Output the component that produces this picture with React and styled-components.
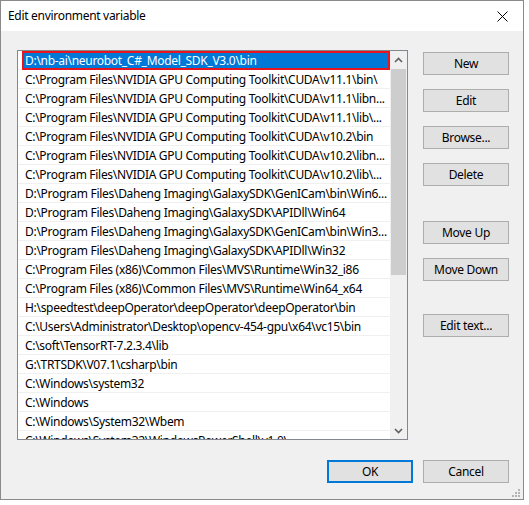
import React from "react";
import styled, { createGlobalStyle } from "styled-components";

const GlobalStyle = createGlobalStyle`
  html, body {
    margin: 0;
    padding: 0;
    background: #ffffff;
  }
  body {
    font-family: "Noto Sans", "Liberation Sans", sans-serif;
    font-size: 12px;
    letter-spacing: -0.3px;
    color: #000;
  }
`;

const paths = [
  "D:\\nb-ai\\neurobot_C#_Model_SDK_V3.0\\bin",
  "C:\\Program Files\\NVIDIA GPU Computing Toolkit\\CUDA\\v11.1\\bin\\",
  "C:\\Program Files\\NVIDIA GPU Computing Toolkit\\CUDA\\v11.1\\libn...",
  "C:\\Program Files\\NVIDIA GPU Computing Toolkit\\CUDA\\v11.1\\lib\\...",
  "C:\\Program Files\\NVIDIA GPU Computing Toolkit\\CUDA\\v10.2\\bin",
  "C:\\Program Files\\NVIDIA GPU Computing Toolkit\\CUDA\\v10.2\\libn...",
  "C:\\Program Files\\NVIDIA GPU Computing Toolkit\\CUDA\\v10.2\\lib\\...",
  "D:\\Program Files\\Daheng Imaging\\GalaxySDK\\GenICam\\bin\\Win6...",
  "D:\\Program Files\\Daheng Imaging\\GalaxySDK\\APIDll\\Win64",
  "D:\\Program Files\\Daheng Imaging\\GalaxySDK\\GenICam\\bin\\Win3...",
  "D:\\Program Files\\Daheng Imaging\\GalaxySDK\\APIDll\\Win32",
  "C:\\Program Files (x86)\\Common Files\\MVS\\Runtime\\Win32_i86",
  "C:\\Program Files (x86)\\Common Files\\MVS\\Runtime\\Win64_x64",
  "H:\\speedtest\\deepOperator\\deepOperator\\deepOperator\\bin",
  "C:\\Users\\Administrator\\Desktop\\opencv-454-gpu\\x64\\vc15\\bin",
  "C:\\soft\\TensorRT-7.2.3.4\\lib",
  "G:\\TRTSDK\\V07.1\\csharp\\bin",
  "C:\\Windows\\system32",
  "C:\\Windows",
  "C:\\Windows\\System32\\Wbem",
  "C:\\Windows\\System32\\WindowsPowerShell\\v1.0\\",
];

const Window = styled.div`
  width: 522px;
  height: 498px;
  border: 1px solid #8a8a8a;
  background: #f0f0f0;
  display: flex;
  flex-direction: column;
`;

const TitleBar = styled.div`
  height: 30px;
  background: #ffffff;
  display: flex;
  align-items: center;
  justify-content: space-between;
  padding: 0 15px 0 7px;
`;

const Title = styled.span`
  font-size: 12px;
  color: #000;
  padding-bottom: 1px;
`;

const Client = styled.div`
  flex: 1;
  position: relative;
  padding: 19px 14px 0 16px;
  display: flex;
  flex-direction: column;
`;

const Body = styled.div`
  display: flex;
  gap: 15px;
`;

const ListBox = styled.div`
  width: 390px;
  height: 388px;
  border: 1px solid #828790;
  background: #ffffff;
  display: flex;
  overflow: hidden;
`;

const Rows = styled.div`
  flex: 1;
  overflow: hidden;
`;

const Row = styled.div`
  height: 18px;
  border-bottom: 1px solid #f0f0f0;
  display: flex;
  padding-left: 4px;
`;

const Item = styled.div`
  flex: 1;
  box-sizing: border-box;
  height: 19px;
  line-height: ${(p) => (p.$selected ? "15px" : "19px")};
  padding-left: ${(p) => (p.$selected ? "1px" : "3px")};
  white-space: nowrap;
  overflow: hidden;
  color: ${(p) => (p.$selected ? "#ffffff" : "#000000")};
  background: ${(p) => (p.$selected ? "#0078d7" : "transparent")};
  border: ${(p) => (p.$selected ? "2px solid #e8141e" : "none")};
`;

const ScrollBar = styled.div`
  width: 17px;
  background: #f0f0f0;
  display: flex;
  flex-direction: column;
  align-items: center;
`;

const Arrow = styled.div`
  width: 17px;
  height: 17px;
  display: flex;
  align-items: center;
  justify-content: center;
`;

const Thumb = styled.div`
  width: 15px;
  height: 206px;
  margin-top: 1px;
  background: #cdcdcd;
`;

const Track = styled.div`
  flex: 1;
`;

const Buttons = styled.div`
  display: flex;
  flex-direction: column;
  padding-top: 2px;
`;

const Button = styled.div`
  box-sizing: border-box;
  width: 86px;
  height: 23px;
  margin-top: ${(p) => p.$gap || 0}px;
  background: #e1e1e1;
  border: ${(p) => (p.$primary ? "2px solid #0078d7" : "1px solid #adadad")};
  display: flex;
  align-items: center;
  justify-content: center;
  font-size: 12px;
  color: #000;
`;

const Footer = styled.div`
  display: flex;
  justify-content: flex-end;
  gap: 10px;
  margin-top: 20px;
`;

const Grip = styled.div`
  position: absolute;
  right: 3px;
  bottom: 2px;
  line-height: 0;
`;

const ChevronUp = () => (
  <svg width="9" height="6" viewBox="0 0 9 6">
    <path d="M1 5 L4.5 1.5 L8 5" fill="none" stroke="#606060" strokeWidth="1.6" />
  </svg>
);

const ChevronDown = () => (
  <svg width="9" height="6" viewBox="0 0 9 6">
    <path d="M1 1 L4.5 4.5 L8 1" fill="none" stroke="#606060" strokeWidth="1.6" />
  </svg>
);

const CloseIcon = () => (
  <svg width="11" height="11" viewBox="0 0 11 11">
    <path d="M0.5 0.5 L10.5 10.5 M10.5 0.5 L0.5 10.5" stroke="#000" strokeWidth="1" />
  </svg>
);

const GripIcon = () => (
  <svg width="8" height="8" viewBox="0 0 8 8" fill="#b4b4b4">
    <rect x="6" y="0" width="2" height="2" />
    <rect x="3" y="3" width="2" height="2" />
    <rect x="6" y="3" width="2" height="2" />
    <rect x="0" y="6" width="2" height="2" />
    <rect x="3" y="6" width="2" height="2" />
    <rect x="6" y="6" width="2" height="2" />
  </svg>
);

export default function App() {
  return (
    <>
      <GlobalStyle />
      <Window>
        <TitleBar>
          <Title>Edit environment variable</Title>
          <CloseIcon />
        </TitleBar>
        <Client>
          <Body>
            <ListBox>
              <Rows>
                {paths.map((p, i) => (
                  <Row key={i}>
                    <Item $selected={i === 0}>{p}</Item>
                  </Row>
                ))}
              </Rows>
              <ScrollBar>
                <Arrow>
                  <ChevronUp />
                </Arrow>
                <Thumb />
                <Track />
                <Arrow>
                  <ChevronDown />
                </Arrow>
              </ScrollBar>
            </ListBox>
            <Buttons>
              <Button>New</Button>
              <Button $gap={14}>Edit</Button>
              <Button $gap={14}>Browse...</Button>
              <Button $gap={14}>Delete</Button>
              <Button $gap={35}>Move Up</Button>
              <Button $gap={14}>Move Down</Button>
              <Button $gap={33}>Edit text...</Button>
            </Buttons>
          </Body>
          <Footer>
            <Button $primary>OK</Button>
            <Button>Cancel</Button>
          </Footer>
          <Grip>
            <GripIcon />
          </Grip>
        </Client>
      </Window>
    </>
  );
}
